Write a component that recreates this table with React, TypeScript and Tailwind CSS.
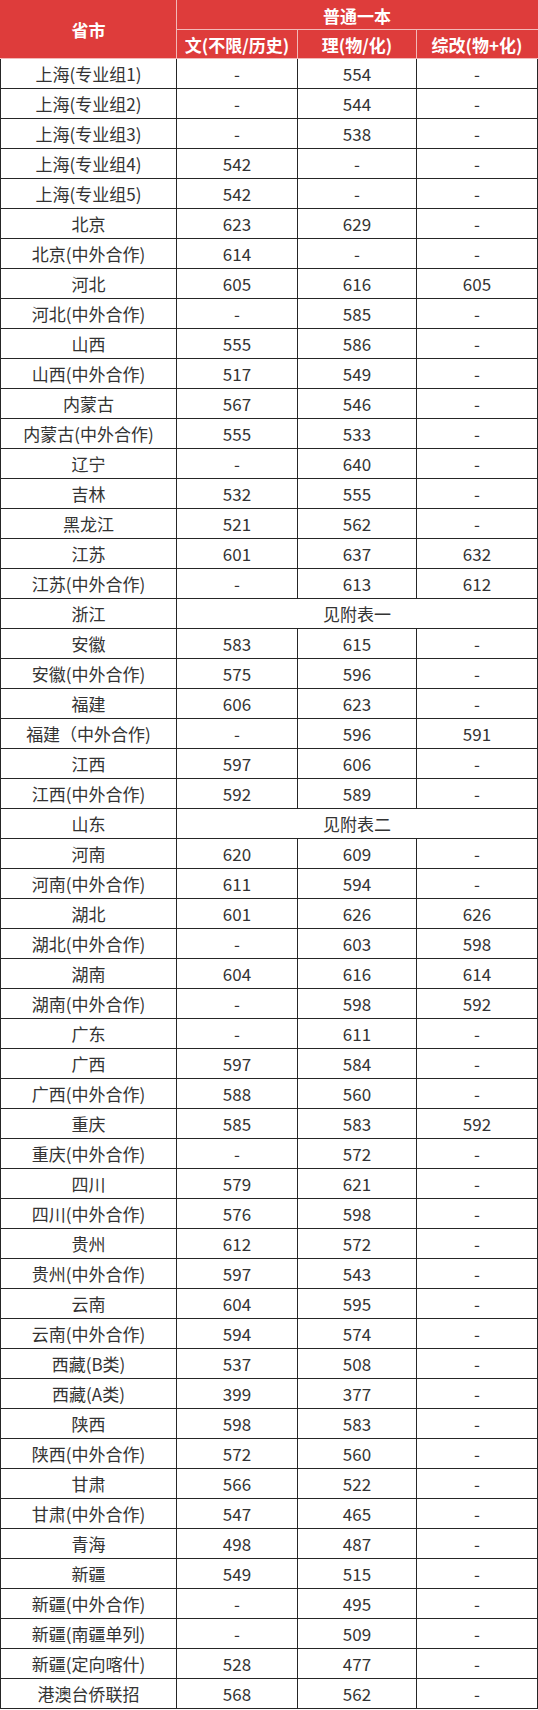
import React from 'react';

type Row = [string, string, string, string] | [string, string];

const rows: Row[] = [
  ['上海(专业组1)', '-', '554', '-'],
  ['上海(专业组2)', '-', '544', '-'],
  ['上海(专业组3)', '-', '538', '-'],
  ['上海(专业组4)', '542', '-', '-'],
  ['上海(专业组5)', '542', '-', '-'],
  ['北京', '623', '629', '-'],
  ['北京(中外合作)', '614', '-', '-'],
  ['河北', '605', '616', '605'],
  ['河北(中外合作)', '-', '585', '-'],
  ['山西', '555', '586', '-'],
  ['山西(中外合作)', '517', '549', '-'],
  ['内蒙古', '567', '546', '-'],
  ['内蒙古(中外合作)', '555', '533', '-'],
  ['辽宁', '-', '640', '-'],
  ['吉林', '532', '555', '-'],
  ['黑龙江', '521', '562', '-'],
  ['江苏', '601', '637', '632'],
  ['江苏(中外合作)', '-', '613', '612'],
  ['浙江', '见附表一'],
  ['安徽', '583', '615', '-'],
  ['安徽(中外合作)', '575', '596', '-'],
  ['福建', '606', '623', '-'],
  ['福建（中外合作)', '-', '596', '591'],
  ['江西', '597', '606', '-'],
  ['江西(中外合作)', '592', '589', '-'],
  ['山东', '见附表二'],
  ['河南', '620', '609', '-'],
  ['河南(中外合作)', '611', '594', '-'],
  ['湖北', '601', '626', '626'],
  ['湖北(中外合作)', '-', '603', '598'],
  ['湖南', '604', '616', '614'],
  ['湖南(中外合作)', '-', '598', '592'],
  ['广东', '-', '611', '-'],
  ['广西', '597', '584', '-'],
  ['广西(中外合作)', '588', '560', '-'],
  ['重庆', '585', '583', '592'],
  ['重庆(中外合作)', '-', '572', '-'],
  ['四川', '579', '621', '-'],
  ['四川(中外合作)', '576', '598', '-'],
  ['贵州', '612', '572', '-'],
  ['贵州(中外合作)', '597', '543', '-'],
  ['云南', '604', '595', '-'],
  ['云南(中外合作)', '594', '574', '-'],
  ['西藏(B类)', '537', '508', '-'],
  ['西藏(A类)', '399', '377', '-'],
  ['陕西', '598', '583', '-'],
  ['陕西(中外合作)', '572', '560', '-'],
  ['甘肃', '566', '522', '-'],
  ['甘肃(中外合作)', '547', '465', '-'],
  ['青海', '498', '487', '-'],
  ['新疆', '549', '515', '-'],
  ['新疆(中外合作)', '-', '495', '-'],
  ['新疆(南疆单列)', '-', '509', '-'],
  ['新疆(定向喀什)', '528', '477', '-'],
  ['港澳台侨联招', '568', '562', '-'],
];

const App: React.FC = () => {
  const cell = 'h-[30px] p-0 border border-[#262626] text-center leading-none';
  const head = 'p-0 border border-[#f2b9b8] text-center leading-none text-white font-bold';

  return (
    <div
      className="w-[538px] bg-white text-[17px] text-[#333]"
      style={{ fontFamily: '"Noto Sans CJK SC", "Noto Sans", sans-serif' }}
    >
      <table className="w-[537px] border-collapse table-fixed">
        <colgroup>
          <col className="w-[176px]" />
          <col className="w-[121px]" />
          <col className="w-[119px]" />
          <col className="w-[121px]" />
        </colgroup>
        <thead className="bg-[#de3c3b]">
          <tr>
            <th rowSpan={2} className={`${head} border-l-[#de3c3b] border-t-[#de3c3b]`}>省市</th>
            <th colSpan={3} className={`${head} h-[29px] border-t-[#de3c3b] border-r-[#de3c3b]`}>普通一本</th>
          </tr>
          <tr>
            <th className={`${head} h-[29px]`}>文(不限/历史)</th>
            <th className={`${head} h-[29px]`}>理(物/化)</th>
            <th className={`${head} h-[29px] border-r-[#de3c3b]`}>综改(物+化)</th>
          </tr>
        </thead>
        <tbody>
          {rows.map((row) => (
            <tr key={row[0]}>
              <td className={cell}>{row[0]}</td>
              {row.length === 2 ? (
                <td colSpan={3} className={cell}>{row[1]}</td>
              ) : (
                <>
                  <td className={cell}>{row[1]}</td>
                  <td className={cell}>{row[2]}</td>
                  <td className={cell}>{row[3]}</td>
                </>
              )}
            </tr>
          ))}
        </tbody>
      </table>
    </div>
  );
};

export default App;
